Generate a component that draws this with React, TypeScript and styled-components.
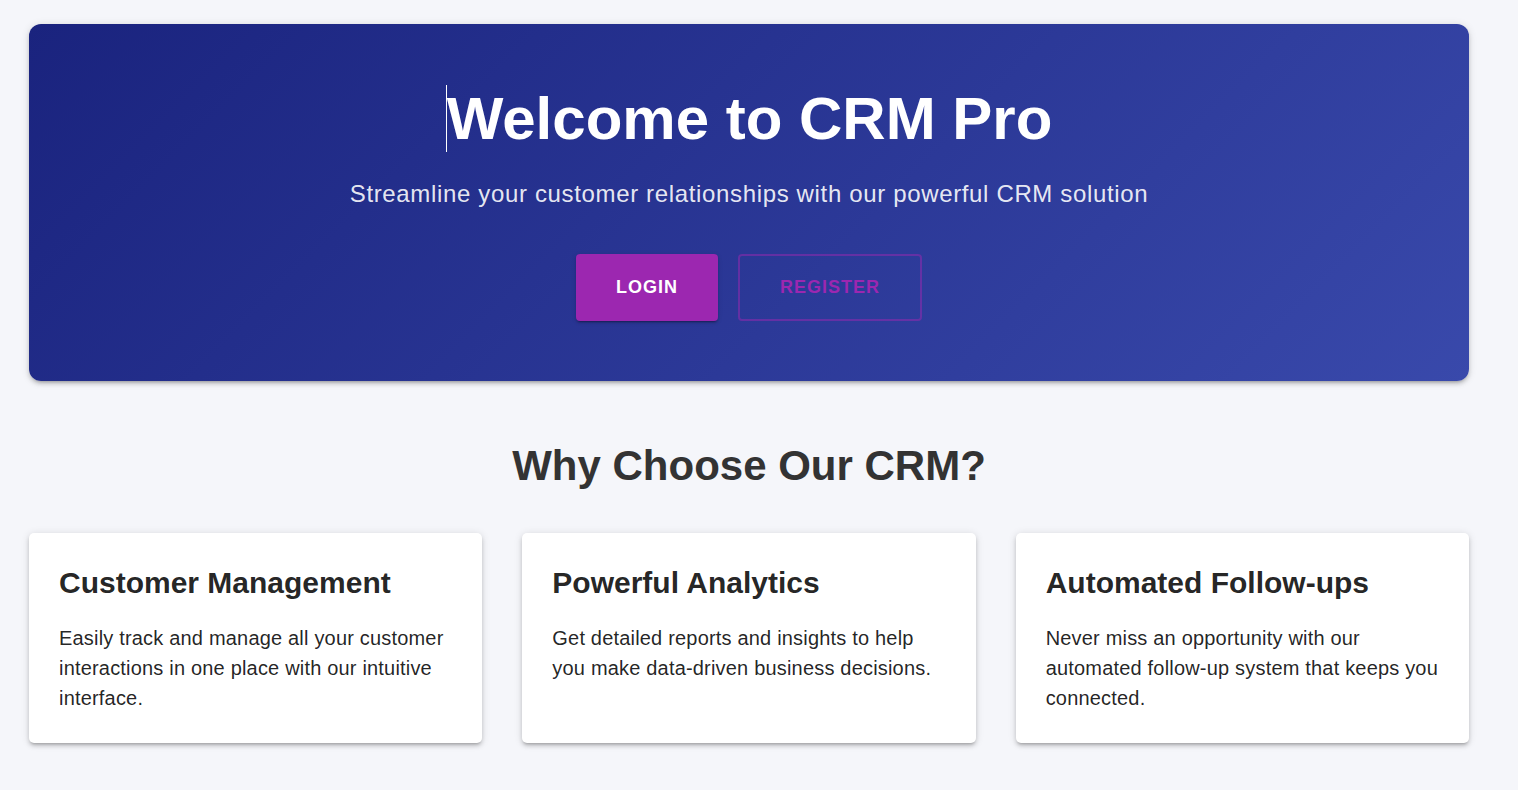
import React from "react";
import styled, { createGlobalStyle } from "styled-components";

const GlobalStyle = createGlobalStyle`
  html, body {
    margin: 0;
    padding: 0;
    background: #f5f6fa;
    font-family: "Liberation Sans", Arial, Helvetica, sans-serif;
  }
  * { box-sizing: border-box; }
`;

const Page = styled.main`
  padding: 24px 49px 40px 29px;
  min-height: 790px;
`;

const Hero = styled.section`
  background: linear-gradient(135deg, #1a237e 0%, #3949ab 100%);
  border-radius: 12px;
  padding: 59px 24px 60px;
  text-align: center;
  color: #fff;
  box-shadow: 0px 3px 3px -2px rgba(0, 0, 0, 0.2), 0px 3px 4px 0px rgba(0, 0, 0, 0.14),
    0px 1px 8px 0px rgba(0, 0, 0, 0.12);
`;

const Title = styled.h1`
  margin: 0 0 23px;
  font-size: 60px;
  line-height: 72px;
  font-weight: 700;
  color: #fff;
`;

const Caret = styled.span`
  border-left: 1px solid #fff;
`;

const Subtitle = styled.p`
  margin: 0 0 44px;
  font-size: 24px;
  line-height: 32px;
  font-weight: 400;
  letter-spacing: 0.65px;
  color: rgba(255, 255, 255, 0.9);
`;

const ButtonRow = styled.div`
  display: flex;
  justify-content: center;
  gap: 20px;
`;

const Button = styled.button<{ $variant: "contained" | "outlined" }>`
  display: inline-flex;
  align-items: center;
  justify-content: center;
  height: 67px;
  padding: 0 40px;
  font-family: inherit;
  font-size: 18px;
  font-weight: 700;
  letter-spacing: 1px;
  text-transform: uppercase;
  border-radius: 4px;
  cursor: pointer;
  border: ${(p) =>
    p.$variant === "contained" ? "none" : "2px solid rgba(156, 39, 176, 0.5)"};
  background: ${(p) => (p.$variant === "contained" ? "#9c27b0" : "transparent")};
  color: ${(p) => (p.$variant === "contained" ? "#fff" : "#9c27b0")};
  box-shadow: ${(p) =>
    p.$variant === "contained"
      ? "0px 3px 1px -2px rgba(0,0,0,0.2), 0px 2px 2px 0px rgba(0,0,0,0.14), 0px 1px 5px 0px rgba(0,0,0,0.12)"
      : "none"};
`;

const SectionTitle = styled.h2`
  margin: 60px 0 43px;
  font-size: 42px;
  line-height: 49px;
  font-weight: 700;
  text-align: center;
  color: #333;
`;

const CardGrid = styled.div`
  display: grid;
  grid-template-columns: repeat(3, 1fr);
  gap: 40px;
`;

const Card = styled.article`
  background: #fff;
  border-radius: 5px;
  padding: 30px;
  box-shadow: 0px 3px 3px -2px rgba(0, 0, 0, 0.2), 0px 3px 4px 0px rgba(0, 0, 0, 0.14),
    0px 1px 8px 0px rgba(0, 0, 0, 0.12);
`;

const CardTitle = styled.h3`
  margin: 0 0 20px;
  font-size: 30px;
  line-height: 40px;
  font-weight: 700;
  color: rgba(0, 0, 0, 0.87);
`;

const CardText = styled.p`
  margin: 0;
  font-size: 20px;
  line-height: 30px;
  letter-spacing: 0.00938em;
  color: rgba(0, 0, 0, 0.87);
`;

const features = [
  {
    title: "Customer Management",
    text: "Easily track and manage all your customer interactions in one place with our intuitive interface.",
  },
  {
    title: "Powerful Analytics",
    text: "Get detailed reports and insights to help you make data-driven business decisions.",
  },
  {
    title: "Automated Follow-ups",
    text: "Never miss an opportunity with our automated follow-up system that keeps you connected.",
  },
];

export default function App() {
  return (
    <>
      <GlobalStyle />
      <Page>
        <Hero>
          <Title>
            <Caret />
            Welcome to CRM Pro
          </Title>
          <Subtitle>Streamline your customer relationships with our powerful CRM solution</Subtitle>
          <ButtonRow>
            <Button $variant="contained">Login</Button>
            <Button $variant="outlined">Register</Button>
          </ButtonRow>
        </Hero>
        <SectionTitle>Why Choose Our CRM?</SectionTitle>
        <CardGrid>
          {features.map((f) => (
            <Card key={f.title}>
              <CardTitle>{f.title}</CardTitle>
              <CardText>{f.text}</CardText>
            </Card>
          ))}
        </CardGrid>
      </Page>
    </>
  );
}
